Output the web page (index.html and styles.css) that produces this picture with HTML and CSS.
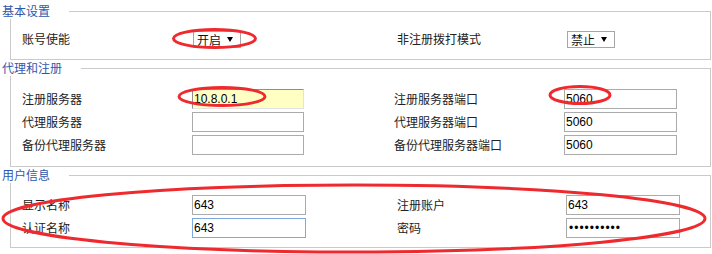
FILE: index.html
```html
<!DOCTYPE html>
<html lang="zh-CN">

<head>
      <meta charset="UTF-8">
      <meta name="viewport" content="width=device-width, initial-scale=1.0">
      <title>SIP 账号设置</title>

      <!-- style -->
      <link rel="stylesheet" href="styles.css">
</head>

<body>
      <div class="page">

            <!-- 基本设置 -->
            <section class="group">
                  <div class="group-head"><span>基本设置</span></div>
                  <div class="group-body basic">
                        <div class="row">
                              <label>账号使能</label>
                              <div class="select"><span>开启</span><i class="arrow"></i></div>
                              <label>非注册拨打模式</label>
                              <div class="select"><span>禁止</span><i class="arrow"></i></div>
                        </div>
                  </div>
            </section>

            <!-- 代理和注册 -->
            <section class="group">
                  <div class="group-head"><span>代理和注册</span></div>
                  <div class="group-body proxy">
                        <div class="row">
                              <label>注册服务器</label>
                              <input class="textInput hint" type="text" value="10.8.0.1">
                              <label>注册服务器端口</label>
                              <input class="textInput" type="text" value="5060">
                        </div>
                        <div class="row">
                              <label>代理服务器</label>
                              <input class="textInput" type="text" value="">
                              <label>代理服务器端口</label>
                              <input class="textInput" type="text" value="5060">
                        </div>
                        <div class="row">
                              <label>备份代理服务器</label>
                              <input class="textInput" type="text" value="">
                              <label>备份代理服务器端口</label>
                              <input class="textInput" type="text" value="5060">
                        </div>
                  </div>
            </section>

            <!-- 用户信息 -->
            <section class="group">
                  <div class="group-head"><span>用户信息</span></div>
                  <div class="group-body user">
                        <div class="row">
                              <label>显示名称</label>
                              <input class="textInput" type="text" value="643">
                              <label>注册账户</label>
                              <input class="textInput" type="text" value="643">
                        </div>
                        <div class="row">
                              <label>认证名称</label>
                              <input class="textInput focus" type="text" value="643">
                              <label>密码</label>
                              <input class="textInput" type="password" value="6436436436">
                        </div>
                  </div>
            </section>

            <!-- red marks drawn over the screenshot -->
            <svg class="marks" width="712" height="254" viewBox="0 0 712 254">
                  <ellipse cx="214.5" cy="38.5" rx="41" ry="9" />
                  <ellipse cx="222" cy="96.5" rx="43" ry="9" />
                  <ellipse cx="580" cy="95" rx="30" ry="8.5" />
                  <ellipse cx="354" cy="218.5" rx="351" ry="33.5" />
            </svg>
      </div>
</body>

</html>
```
FILE: styles.css
```css
* {
      box-sizing: border-box;
      margin: 0;
      padding: 0;
}

body {
      font-family: "Liberation Sans", "Noto Sans CJK SC", sans-serif;
      font-size: 12px;
      color: #222;
      background: #fff;
}

.page {
      position: relative;
      width: 712px;
      height: 254px;
      padding-top: 3px;
      overflow: hidden;
}

/* ---- group (fieldset look) ---- */

.group-head {
      display: flex;
      height: 16px;
}

.group-head span {
      padding: 0 19px 0 2px;
      line-height: 16px;
      color: #2f58aa;
      font-family: "Noto Sans CJK SC", sans-serif;
}

.group-head::after {
      content: "";
      flex: 1;
      margin-top: 8px;
      margin-right: 1px;
      border-top: 1px solid #cacaca;
      border-right: 1px solid #cacaca;
}

.group-body {
      margin: 0 1px 0 10px;
      border: 1px solid #cacaca;
      border-top: none;
      padding: 0 0 10px 11px;
}

.basic {
      padding-top: 10px;
}

.proxy {
      padding-top: 11px;
}

.user {
      padding-top: 10px;
      padding-bottom: 8px;
}

/* ---- rows ---- */

.row {
      display: grid;
      grid-template-columns: 170px 205px 169px 1fr;
      align-items: center;
      height: 23px;
}

.basic .row {
      height: 20px;
}

.proxy .row {
      grid-template-columns: 170px 202px 170px 1fr;
}

.row label {
      font-family: "Noto Sans CJK SC", sans-serif;
      line-height: 16px;
      color: #222;
}

/* ---- controls ---- */

.select {
      display: flex;
      align-items: center;
      width: 48px;
      height: 17px;
      margin-left: 1px;
      padding-left: 3px;
      border: 1px solid #a6a6a6;
      font-family: "Noto Sans CJK SC", sans-serif;
      line-height: 15px;
      color: #111;
}

.arrow {
      width: 0;
      height: 0;
      margin-left: 6px;
      border-left: 3px solid transparent;
      border-right: 3px solid transparent;
      border-top: 5px solid #000;
}

.textInput {
      width: 114px;
      height: 20px;
      padding: 0 1px;
      border: 1px solid #ababab;
      outline: none;
      font-family: "Liberation Sans", sans-serif;
      font-size: 12px;
      color: #000;
      background: #fff;
}

.proxy .textInput {
      width: 112px;
}

.proxy .row .textInput:last-child {
      width: 113px;
}

.hint {
      background: #ffffc4;
      border-color: #8e8e8e #e2e2e2 #e2e2e2 #8e8e8e;
}

.focus {
      border-color: #7ea9e0;
}

input[type="password"] {
      letter-spacing: 1px;
      padding-left: 2px;
}

/* ---- red marks ---- */

.marks {
      position: absolute;
      top: 0;
      left: 0;
      pointer-events: none;
}

.marks ellipse {
      fill: none;
      stroke: #ee2a2e;
      stroke-width: 3;
}
```
